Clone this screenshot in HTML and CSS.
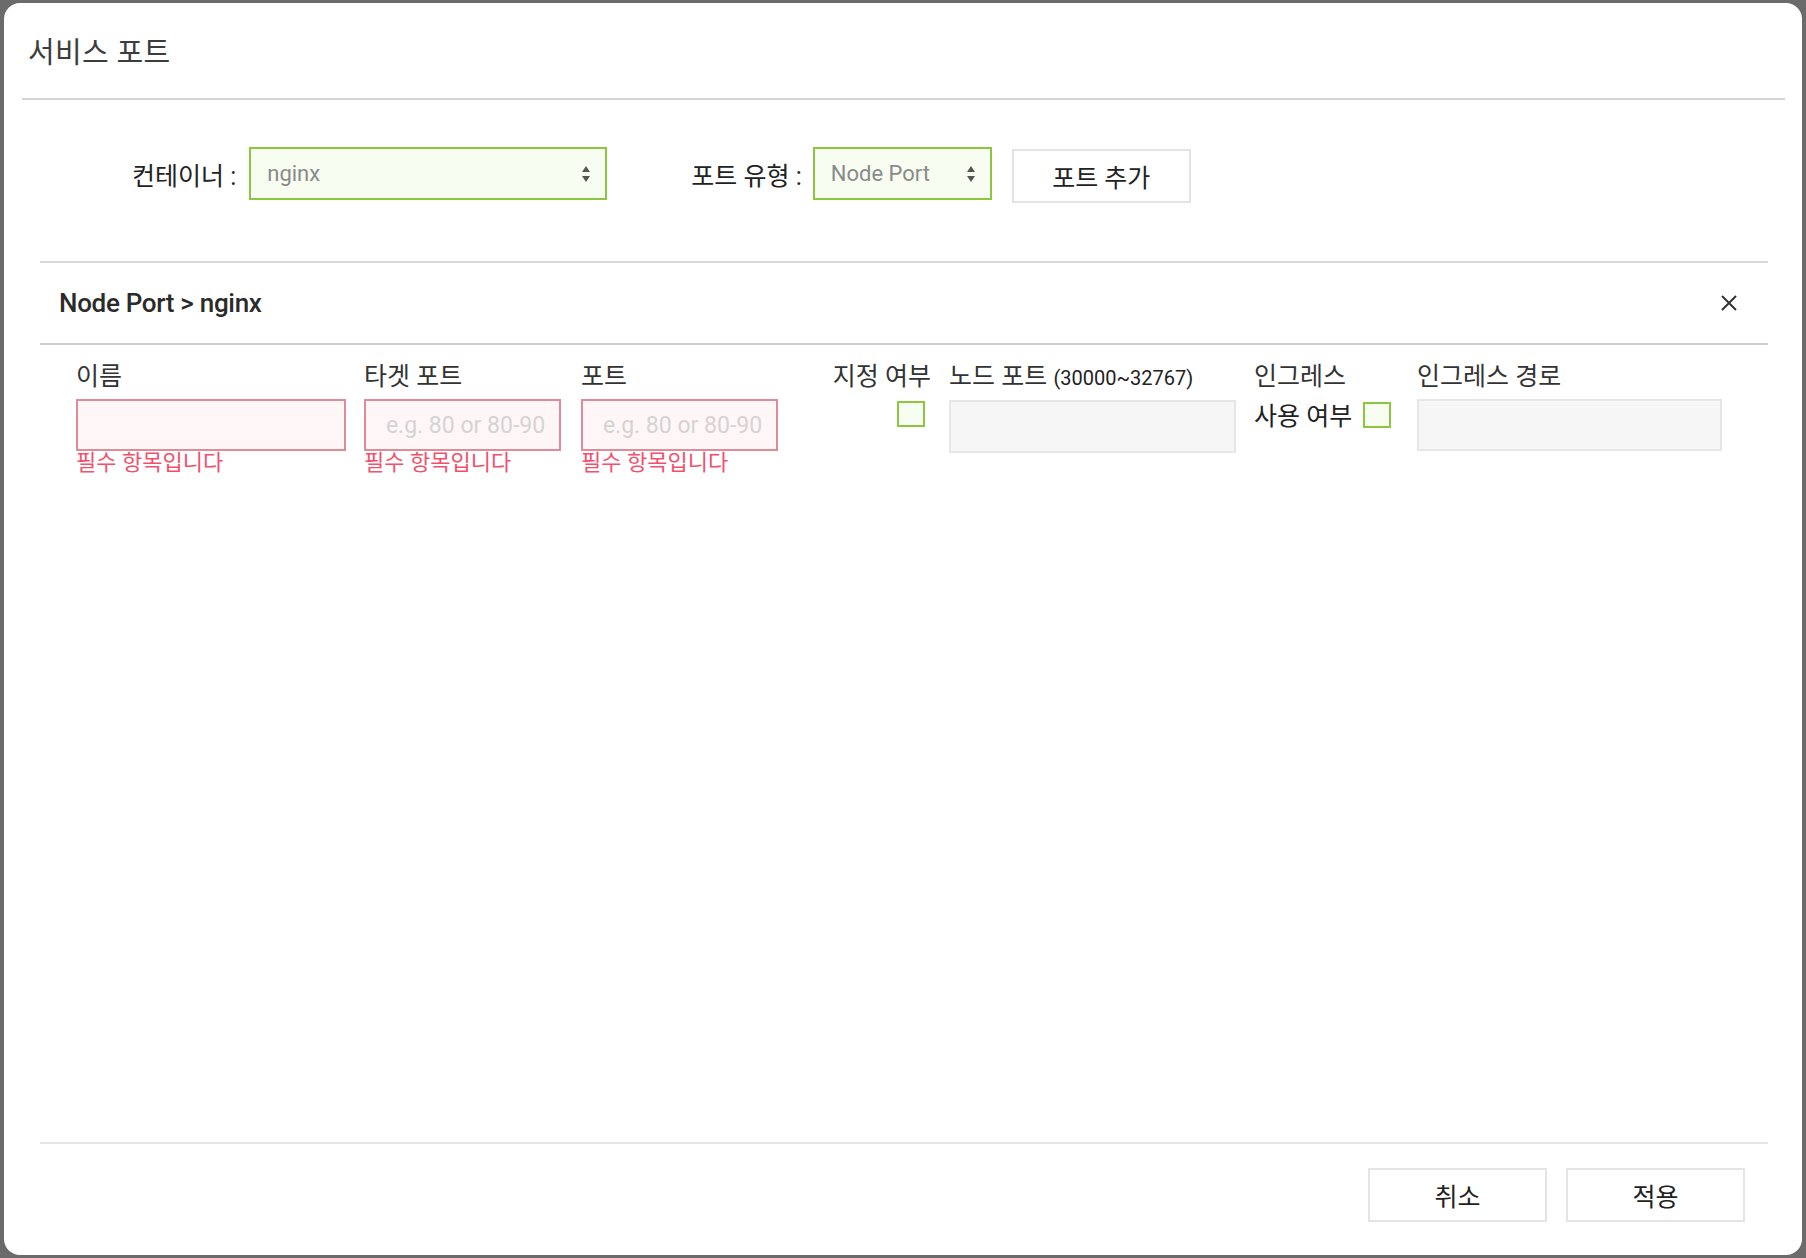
FILE: index.html
```html
<!DOCTYPE html>
<html lang="ko">
<head>
<meta charset="utf-8">
<title>서비스 포트</title>
<link rel="stylesheet" href="styles.css">
</head>
<body>
<div class="modal">
  <div class="modal-head">
    <h1 class="title">서비스 포트</h1>
  </div>
  <div class="toolbar">
    <span class="tb-label lbl-container">컨테이너 :</span>
    <div class="select sel-container">
      <span class="sel-text">nginx</span>
      <svg class="sel-arrow" width="10" height="18" viewBox="0 0 10 18"><path d="M5 1 L9 7 L1 7 Z M5 17 L9 11 L1 11 Z" fill="#555"/></svg>
    </div>
    <span class="tb-label lbl-type">포트 유형 :</span>
    <div class="select sel-type">
      <span class="sel-text">Node Port</span>
      <svg class="sel-arrow" width="10" height="18" viewBox="0 0 10 18"><path d="M5 1 L9 7 L1 7 Z M5 17 L9 11 L1 11 Z" fill="#555"/></svg>
    </div>
    <button class="btn btn-add">포트 추가</button>
  </div>

  <div class="section">
    <div class="section-head">
      <span class="section-title">Node Port &gt; nginx</span>
      <svg class="close" width="18" height="18" viewBox="0 0 18 18"><path d="M2 2 L16 16 M16 2 L2 16" stroke="#333" stroke-width="2" fill="none"/></svg>
    </div>
    <div class="fields">
      <div class="field f-name">
        <div class="f-label">이름</div>
        <div class="input err"></div>
        <div class="f-error">필수 항목입니다</div>
      </div>
      <div class="field f-target">
        <div class="f-label">타겟 포트</div>
        <div class="input err"><span class="ph">e.g. 80 or 80-90</span></div>
        <div class="f-error">필수 항목입니다</div>
      </div>
      <div class="field f-port">
        <div class="f-label">포트</div>
        <div class="input err"><span class="ph">e.g. 80 or 80-90</span></div>
        <div class="f-error">필수 항목입니다</div>
      </div>
      <div class="field f-assign">
        <div class="f-label">지정 여부</div>
        <div class="check-wrap"><span class="check"></span></div>
      </div>
      <div class="field f-node">
        <div class="f-label">노드 포트 <small class="range">(30000~32767)</small></div>
        <div class="input disabled"></div>
      </div>
      <div class="field f-ingress">
        <div class="f-label">인그레스</div>
        <div class="ing-use">사용 여부 <span class="check"></span></div>
      </div>
      <div class="field f-path">
        <div class="f-label">인그레스 경로</div>
        <div class="input disabled"></div>
      </div>
    </div>
  </div>

  <div class="spacer"></div>

  <div class="footer">
    <button class="btn">취소</button>
    <button class="btn">적용</button>
  </div>
</div>
</body>
</html>
```

FILE: styles.css
```css
* { box-sizing: border-box; }
html, body { height: 100%; }
body {
  margin: 0;
  background: #6b6b6b;
  padding: 3px 4px 3px 4px;
  font-family: Roboto, "Noto Sans CJK KR", sans-serif;
  color: #333;
}
.modal {
  height: 1252px;
  background: #fff;
  border-radius: 16px;
  display: flex;
  flex-direction: column;
  overflow: hidden;
}
.modal-head {
  margin: 0 17px 0 18px;
  height: 97px;
  border-bottom: 2px solid #d4d4d4;
  display: flex;
  align-items: center;
  padding-left: 6px;
  padding-bottom: 2px;
}
.title {
  margin: 0;
  font-size: 29px;
  font-weight: 400;
  color: #3d3d3d;
  letter-spacing: 0.3px;
}
.toolbar {
  display: flex;
  align-items: center;
  height: 161px;
  padding: 0 0 14px 128px;
}
.tb-label {
  font-size: 25px;
  color: #222;
  white-space: nowrap;
}
.lbl-container { margin-right: 13px; }
.lbl-type { margin-left: 84px; margin-right: 11px; }
.select {
  height: 53px;
  border: 2px solid #8cc63f;
  background: #f8fdf2;
  display: flex;
  align-items: center;
  justify-content: space-between;
  padding: 0 14px 0 16px;
  flex: none;
}
.sel-container { width: 358px; }
.sel-type { width: 179px; }
.sel-text {
  font-size: 22px;
  color: #8a8a8a;
}
.sel-arrow { display: block; }
.btn {
  height: 54px;
  width: 179px;
  border: 2px solid #e4e4e4;
  background: #fff;
  font-family: Roboto, "Noto Sans CJK KR", sans-serif;
  font-size: 25px;
  color: #222;
  padding: 0;
  flex: none;
}
.btn-add { margin-left: 20px; margin-top: 4px; }

.section {
  margin: 0 34px 0 36px;
  border-top: 2px solid #d8d8d8;
}
.section-head {
  height: 82px;
  border-bottom: 2px solid #cfcfcf;
  display: flex;
  align-items: center;
  justify-content: space-between;
  padding: 0 30px 0 19px;
}
.section-title {
  font-size: 26px;
  font-weight: 500;
  color: #2b2b2b;
  letter-spacing: -0.3px;
}
.close { display: block; }

.fields {
  display: flex;
  align-items: flex-start;
  padding: 17px 0 0 36px;
}
.field { display: flex; flex-direction: column; flex: none; }
.f-label {
  height: 30px;
  line-height: 30px;
  font-size: 25px;
  color: #333;
  white-space: nowrap;
  margin-bottom: 7px;
}
.range { font-size: 20px; color: #222; }
.input {
  height: 52px;
  border: 2px solid #e3e3e3;
  display: flex;
  align-items: center;
  justify-content: center;
}
.input.err {
  border-color: #e08c98;
  background: #fff6f7;
}
.input.disabled {
  background: #f6f6f6;
  border-color: #e6e6e6;
}
.ph {
  font-size: 23px;
  color: #d4d4d4;
  margin-left: 6px;
}
.f-error {
  font-size: 22px;
  line-height: 24px;
  color: #f2506c;
  white-space: nowrap;
}
.f-name { width: 270px; margin-right: 18px; }
.f-target { width: 197px; margin-right: 20px; }
.f-port { width: 197px; margin-right: 56px; }
.f-assign { width: 97px; margin-right: 18px; align-items: flex-end; }
.check-wrap { padding-right: 6px; padding-top: 2px; }
.check {
  display: inline-block;
  width: 28px;
  height: 26px;
  border: 2px solid #8cc63f;
  background: #f8fdf2;
  vertical-align: middle;
}
.f-node { width: 287px; margin-right: 18px; }
.f-node .input { margin-top: 1px; height: 53px; }
.f-ingress { width: 145px; margin-right: 18px; }
.ing-use {
  font-size: 25px;
  color: #222;
  white-space: nowrap;
  margin-top: -3px;
}
.ing-use .check { margin-left: 5px; margin-top: -7px; }
.f-path { width: 305px; }

.spacer { flex: 1; }

.footer {
  margin: 0 34px 0 36px;
  border-top: 2px solid #e5e5e5;
  display: flex;
  justify-content: flex-end;
  gap: 19px;
  padding: 24px 23px 33px 0;
}
```
